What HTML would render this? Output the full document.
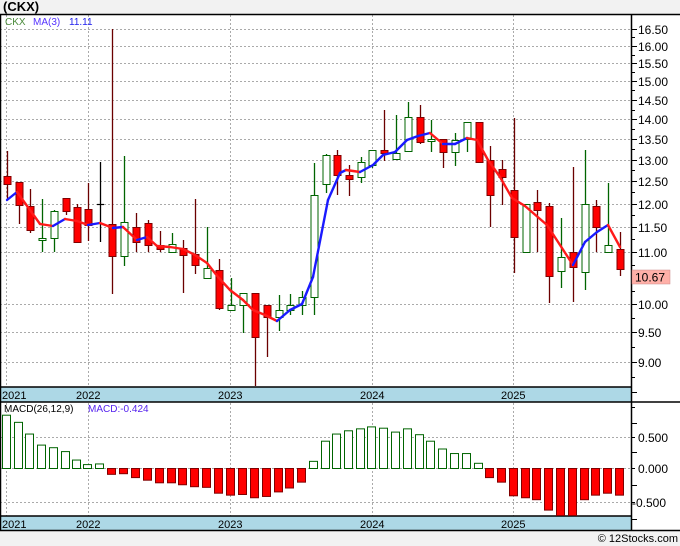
<!DOCTYPE html>
<html><head><meta charset="utf-8"><style>
html,body{margin:0;padding:0;width:680px;height:546px;background:#f2f2f2;overflow:hidden}
svg{display:block;font-family:"Liberation Sans",sans-serif}
</style></head><body>
<svg id="s" width="680" height="546" xmlns="http://www.w3.org/2000/svg">
<rect x="0" y="14" width="680" height="517" fill="#fff"/>
<text x="3" y="11" font-size="13" font-weight="bold" fill="#000">(CKX)</text>
<g id="grid" stroke="#aaa" stroke-dasharray="2,2" stroke-width="1"></g>
<!-- bands -->
<rect x="0" y="387" width="631" height="15" fill="#add8e6"/>
<rect x="0" y="516" width="631" height="14" fill="#add8e6"/>
<g stroke="#000" stroke-width="1.5">
<line x1="0" y1="14.5" x2="680" y2="14.5"/>
<line x1="0" y1="387" x2="631" y2="387"/>
<line x1="0" y1="402" x2="680" y2="402"/>
<line x1="0" y1="516" x2="631" y2="516"/>
<line x1="0" y1="530.5" x2="680" y2="530.5"/>
<line x1="631.5" y1="14" x2="631.5" y2="531"/>
<line x1="0.5" y1="14" x2="0.5" y2="531"/>
</g>
<g id="ticks" stroke="#000" stroke-width="1"></g>
<g id="macd"></g>
<g id="candles"></g>
<g id="ma" stroke-width="2.4" fill="none" stroke-linecap="round"></g>
<g font-size="12" fill="#000">
<text x="638" y="34">16.50</text><text x="638" y="51">16.00</text><text x="638" y="68">15.50</text>
<text x="638" y="86">15.00</text><text x="638" y="105">14.50</text><text x="638" y="124">14.00</text>
<text x="638" y="144">13.50</text><text x="638" y="165">13.00</text><text x="638" y="186">12.50</text>
<text x="638" y="209">12.00</text><text x="638" y="232">11.50</text><text x="638" y="257">11.00</text>
<text x="638" y="309">10.00</text><text x="638" y="337">9.50</text><text x="638" y="367">9.00</text>
<text x="638" y="442">0.500</text><text x="638" y="473">0.000</text><text x="632" y="507">-0.500</text>
</g>
<rect x="632" y="270" width="38" height="14" fill="#ffb0a8" stroke="#c88" stroke-width="0.5"/>
<text x="635" y="281.5" font-size="12" fill="#000">10.67</text>
<g font-size="11" fill="#000">
<text x="2" y="399">2021</text><text x="76" y="399">2022</text><text x="218" y="399">2023</text><text x="360" y="399">2024</text><text x="501" y="399">2025</text>
<text x="2" y="528">2021</text><text x="76" y="528">2022</text><text x="218" y="528">2023</text><text x="360" y="528">2024</text><text x="501" y="528">2025</text>
</g>
<g font-size="10">
<text x="5" y="25" fill="#4a8a3a">CKX</text>
<text x="33" y="25" fill="#5533ff">MA(3)</text>
<text x="69" y="25" fill="#2222ee">11.11</text>
<text x="4" y="412" fill="#000">MACD(26,12,9)</text>
<text x="88" y="412" fill="#5522ee">MACD:-0.424</text>
</g>
<text x="678" y="542" font-size="11" fill="#000" text-anchor="end">© 12Stocks.com</text>
</svg>
<script>
var NS="http://www.w3.org/2000/svg";
function el(p,t,a){var e=document.createElementNS(NS,t);for(var k in a)e.setAttribute(k,a[k]);document.getElementById(p).appendChild(e);return e;}
// grid
[29,46,63,81,100,119,139,160,181,204,227,252,304,332,362].forEach(function(y){el('grid','line',{x1:0,y1:y+.5,x2:631,y2:y+.5});});
[437,468,502].forEach(function(y){el('grid','line',{x1:0,y1:y+.5,x2:631,y2:y+.5});});
[6,88,230,372,513].forEach(function(x){el('grid','line',{x1:x+.5,y1:15,x2:x+.5,y2:387});el('grid','line',{x1:x+.5,y1:403,x2:x+.5,y2:516});});
// ticks
var T=[29,37,46,55,63,72,81,90,100,110,119,129,139,149,160,170,181,192,204,215,227,239,252,265,278,291,304,318,332,347,362,377,392,407,423,437,452,468,485,502,519];
T.forEach(function(y,i){el('ticks','line',{x1:631,y1:y+.5,x2:(i%2==0?637:635),y2:y+.5});});
// candles
var C=[[7,151,200,176,184,'r'],[19,182,224,182,205,'r'],[30,189,233,206,230,'r'],[42,199,252,238,240,'g'],[54,210,252,211,238,'g'],[66,198,215,198,211,'r'],[77,204,242,207,242,'r'],[88,183,241,209,225,'r'],[100,162,242,204,205,'k'],[112,29,294,224,256,'r'],[124,156,266,222,256,'g'],[136,213,252,227,242,'r'],[148,220,252,223,245,'r'],[160,231,252,245,249,'r'],[172,233,252,244,252,'g'],[183,240,293,248,255,'r'],[195,199,274,254,265,'r'],[207,227,278,268,278,'g'],[219,259,310,270,308,'r'],[231,278,310,305,310,'g'],[243,293,333,293,305,'g'],[255,293,387,293,337,'r'],[267,305,357,305,317,'r'],[279,295,331,310,317,'g'],[290,294,315,305,310,'g'],[302,291,315,297,305,'g'],[314,163,315,195,297,'g'],[326,154,193,155,184,'g'],[337,150,195,155,175,'r'],[349,165,196,175,179,'r'],[361,157,183,162,177,'g'],[372,150,168,150,165,'g'],[384,110,161,150,153,'r'],[396,115,159,153,159,'g'],[408,102,152,117,151,'g'],[420,105,144,117,142,'r'],[431,120,152,139,140,'g'],[443,139,168,139,152,'r'],[455,133,166,140,152,'g'],[467,122,152,122,139,'g'],[479,122,162,122,162,'r'],[490,146,227,160,195,'r'],[502,160,205,169,177,'r'],[514,118,273,190,237,'r'],[526,204,252,204,252,'g'],[537,190,252,202,210,'r'],[549,203,303,206,276,'r'],[561,218,288,257,271,'g'],[573,167,302,252,267,'r'],[585,150,290,204,272,'g'],[596,200,252,206,227,'r'],[608,183,252,245,252,'g'],[620,232,276,249,269,'r']];
C.forEach(function(c){
 var x=c[0],col=c[5]=='r'?'#6b0000':(c[5]=='g'?'#006400':'#000');
 el('candles','line',{x1:x+.5,y1:c[1],x2:x+.5,y2:Math.min(c[2],386),stroke:col,'stroke-width':1.3});
 if(c[5]=='k'){el('candles','line',{x1:x-3,y1:c[3]+.5,x2:x+4,y2:c[3]+.5,stroke:'#000','stroke-width':1.2});return;}
 var h=Math.max(c[4]-c[3],2);
 el('candles','rect',{x:x-3,y:c[3]+.5,width:7,height:h,fill:c[5]=='r'?'#ff0000':'#fff',stroke:c[5]=='r'?'#800000':'#006400','stroke-width':1});
});
// MA
var P=[[7,200],[17,192],[30,210],[40,224],[53,226],[65,219],[77,221],[88,225],[100,223],[113,228],[123,227],[137,240],[147,237],[157,246],[170,247],[183,249],[195,255],[207,263],[218,277],[230,290],[243,300],[253,310],[265,315],[277,321],[290,310],[302,304],[313,277],[328,200],[340,173],[346,170],[360,172],[373,165],[383,155],[395,152],[407,140],[418,136],[430,133],[443,144],[455,144],[467,138],[477,140],[488,160],[500,177],[512,198],[525,206],[547,225],[573,265],[585,242],[597,232],[608,225],[620,247]];
for(var i=1;i<P.length;i++){var a=P[i-1],b=P[i];el('ma','line',{x1:a[0],y1:a[1],x2:b[0],y2:b[1],stroke:(b[1]<=a[1]?'#1a1aff':'#ff1a1a')});}
// MACD
var M=[0.82,0.71,0.53,0.36,0.32,0.26,0.13,0.06,0.07,-0.09,-0.08,-0.14,-0.18,-0.22,-0.22,-0.25,-0.28,-0.29,-0.38,-0.41,-0.40,-0.45,-0.43,-0.36,-0.30,-0.21,0.11,0.42,0.53,0.58,0.61,0.64,0.62,0.56,0.61,0.52,0.42,0.30,0.23,0.23,0.08,-0.14,-0.21,-0.42,-0.45,-0.48,-0.64,-0.73,-0.73,-0.48,-0.41,-0.38,-0.41];
M.forEach(function(v,i){var x=C[i][0]-1,h=v*65,y=v>0?468-h:468;var hh=Math.abs(h);if(y+hh>515)hh=515-y;
 el('macd','rect',{x:x-3.5,y:y+.5,width:8,height:hh,fill:v>0?'#fff':'#ff0000',stroke:v>0?'#006400':'#800000','stroke-width':1});});
</script>
</body></html>
